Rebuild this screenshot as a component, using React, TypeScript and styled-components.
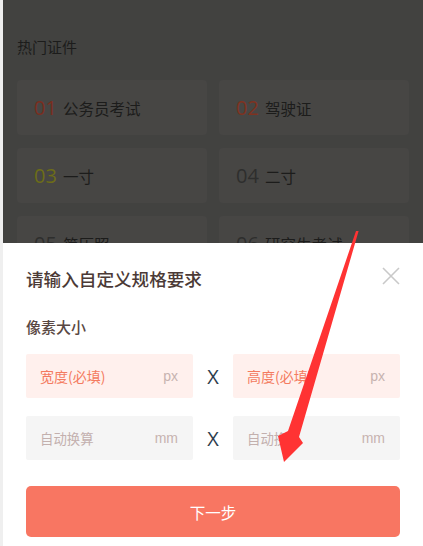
import React from "react";
import styled, { createGlobalStyle } from "styled-components";

const Global = createGlobalStyle`
  html, body { margin: 0; padding: 0; background: #efefef; overflow: hidden; }
  * { box-sizing: border-box; }
`;

const CJK = `"Noto Sans CJK SC", "Noto Sans", sans-serif`;

const Screen = styled.div`
  position: relative;
  margin-left: 3px;
  width: 420px;
  height: 546px;
  display: flex;
  flex-direction: column;
  font-family: ${CJK};
`;

const Backdrop = styled.div`
  flex: 1;
  overflow: hidden;
  background: #424240;
  padding: 36px 14px 0;
`;

const Heading = styled.div`
  font-size: 15px;
  line-height: 22px;
  color: #1c1c1b;
`;

const CardGrid = styled.div`
  margin-top: 22px;
  display: grid;
  grid-template-columns: 190px 190px;
  column-gap: 12px;
  row-gap: 13px;
`;

const Card = styled.div`
  height: 55px;
  border-radius: 4px;
  background: #474644;
  display: flex;
  align-items: center;
  padding-left: 17px;
  gap: 6px;
`;

const Num = styled.span<{ $color: string }>`
  font-family: "Open Sans", "Noto Sans", sans-serif;
  font-size: 20px;
  color: ${(p) => p.$color};
`;

const CardLabel = styled.span`
  font-size: 15.5px;
  color: #1c1c1b;
`;

const Sheet = styled.div`
  height: 303px;
  flex: none;
  background: #ffffff;
  padding: 24px 23px 0;
  display: flex;
  flex-direction: column;
`;

const TitleRow = styled.div`
  display: flex;
  justify-content: space-between;
  align-items: flex-start;
`;

const Title = styled.div`
  font-size: 17.6px;
  line-height: 24px;
  font-weight: 500;
  color: #4b3a36;
`;

const Close = styled.button`
  border: 0;
  background: none;
  padding: 0;
  margin: 0;
  width: 18px;
  height: 18px;
  display: block;
`;

const SubTitle = styled.div`
  margin-top: 25px;
  font-size: 15px;
  line-height: 22px;
  font-weight: 500;
  color: #5a4843;
`;

const InputRow = styled.div<{ $top: number }>`
  margin-top: ${(p) => p.$top}px;
  display: grid;
  grid-template-columns: 167px 40px 167px;
  align-items: center;
`;

const Field = styled.div<{ $required?: boolean }>`
  height: 44px;
  background: ${(p) => (p.$required ? "#fff0ed" : "#f5f5f5")};
  border-radius: 2px;
  display: flex;
  align-items: center;
  justify-content: space-between;
  padding: 0 15px 0 14px;
`;

const Placeholder = styled.span<{ $required?: boolean }>`
  font-size: ${(p) => (p.$required ? "14px" : "13.4px")};
  color: ${(p) => (p.$required ? "#f47b60" : "#c3b0ae")};
`;

const Unit = styled.span`
  font-family: "Liberation Sans", sans-serif;
  font-size: 14px;
  color: #c7b3b0;
`;

const Times = styled.span`
  font-family: "Open Sans", "Noto Sans", sans-serif;
  font-size: 20px;
  font-weight: 500;
  color: #2e3d4d;
  text-align: center;
`;

const NextButton = styled.button`
  margin-top: 26px;
  height: 51px;
  width: 100%;
  border: 0;
  border-radius: 5px;
  background: #f87662;
  color: #ffffff;
  font-family: ${CJK};
  font-size: 15.5px;
`;

const Annotation = styled.svg`
  position: absolute;
  left: -3px;
  top: 0;
  width: 423px;
  height: 546px;
  pointer-events: none;
`;

const cards = [
  { n: "01", c: "#7a2e1f", t: "公务员考试" },
  { n: "02", c: "#7f3220", t: "驾驶证" },
  { n: "03", c: "#6d6d17", t: "一寸" },
  { n: "04", c: "#2e2e2d", t: "二寸" },
  { n: "05", c: "#2e2e2d", t: "简历照" },
  { n: "06", c: "#2e2e2d", t: "研究生考试" },
];

function Row({ top, required, label, unit }: { top: number; required?: boolean; label: [string, string]; unit: string }) {
  return (
    <InputRow $top={top}>
      <Field $required={required}>
        <Placeholder $required={required}>{label[0]}</Placeholder>
        <Unit>{unit}</Unit>
      </Field>
      <Times>X</Times>
      <Field $required={required}>
        <Placeholder $required={required}>{label[1]}</Placeholder>
        <Unit>{unit}</Unit>
      </Field>
    </InputRow>
  );
}

export default function App() {
  return (
    <>
      <Global />
      <Screen>
        <Backdrop>
          <Heading>热门证件</Heading>
          <CardGrid>
            {cards.map((c) => (
              <Card key={c.n}>
                <Num $color={c.c}>{c.n}</Num>
                <CardLabel>{c.t}</CardLabel>
              </Card>
            ))}
          </CardGrid>
        </Backdrop>
        <Sheet>
          <TitleRow>
            <Title>请输入自定义规格要求</Title>
            <Close aria-label="close">
              <svg width="18" height="18" viewBox="0 0 18 18">
                <path d="M1 1 L17 17 M17 1 L1 17" stroke="#c9c9c9" strokeWidth="1.6" fill="none" />
              </svg>
            </Close>
          </TitleRow>
          <SubTitle>像素大小</SubTitle>
          <Row top={16} required label={["宽度(必填)", "高度(必填)"]} unit="px" />
          <Row top={18} label={["自动换算", "自动换算"]} unit="mm" />
          <NextButton>下一步</NextButton>
        </Sheet>
        <Annotation viewBox="0 0 423 546">
          <polygon
            points="356,231 358.6,231 299,437 303,443 284,462 278,436 288,431"
            fill="#ff3333"
          />
        </Annotation>
      </Screen>
    </>
  );
}
